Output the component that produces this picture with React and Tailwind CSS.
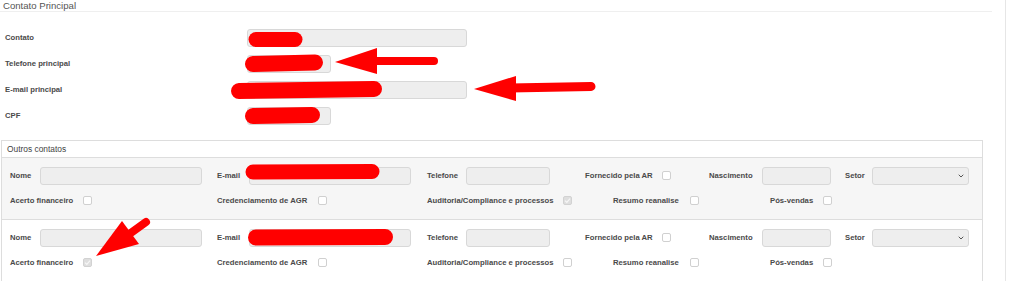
import React from "react";
import { ChevronDown } from "lucide-react";

const Box = ({ checked }) =>
  checked ? (
    <span className="flex h-[9px] w-[9px] shrink-0 items-center justify-center rounded-[2px] border border-[#d2d2d2] bg-[#dedede]">
      <svg width="7" height="7" viewBox="0 0 7 7">
        <path d="M1 3.6 L2.8 5.3 L6 1.6" stroke="#f6f6f6" strokeWidth="1.2" fill="none" />
      </svg>
    </span>
  ) : (
    <span className="h-[9px] w-[9px] shrink-0 rounded-[2px] border border-[#d0d0d0] bg-white" />
  );

const Field = ({ className }) => (
  <div className={`h-[18px] shrink-0 rounded-[3px] border border-[#d8d8d8] bg-[#eeeeee] ${className}`} />
);

const ContactRow = ({ checks, last }) => (
  <div className={`pl-[8px] pt-[9px] ${last ? "pb-[14px] bg-white" : "pb-[12px] bg-[#f6f6f6] border-b border-[#dddddd]"}`}>
    <div className="flex h-[18px] items-center">
      <div className="flex w-[207px] items-center">
        <span className="w-[30px]">Nome</span>
        <Field className="w-[162px]" />
      </div>
      <div className="flex w-[210px] items-center">
        <span className="w-[32px]">E-mail</span>
        <Field className="w-[162px]" />
      </div>
      <div className="flex w-[158px] items-center">
        <span className="w-[39px]">Telefone</span>
        <Field className="w-[84px]" />
      </div>
      <div className="flex w-[124px] items-center">
        <span className="w-[77px]">Fornecido pela AR</span>
        <Box />
      </div>
      <div className="flex w-[136px] items-center">
        <span className="w-[53px]">Nascimento</span>
        <Field className="w-[69px]" />
      </div>
      <div className="flex items-center">
        <span className="w-[27px]">Setor</span>
        <div className="flex h-[18px] w-[97px] items-center justify-end rounded-[3px] border border-[#d8d8d8] bg-[#eeeeee] pr-[3px] text-[#555]">
          <ChevronDown size={8} strokeWidth={3} />
        </div>
      </div>
    </div>
    <div className="mt-[10px] flex h-[12px] items-center">
      <div className="flex w-[207px] items-center">
        <span className="w-[73px]">Acerto financeiro</span>
        <Box checked={checks[0]} />
      </div>
      <div className="flex w-[210px] items-center">
        <span className="w-[101px]">Credenciamento de AGR</span>
        <Box checked={checks[1]} />
      </div>
      <div className="flex w-[186px] items-center">
        <span className="w-[136px]">Auditoria/Compliance e processos</span>
        <Box checked={checks[2]} />
      </div>
      <div className="flex w-[157px] items-center">
        <span className="w-[77px]">Resumo reanalise</span>
        <Box checked={checks[3]} />
      </div>
      <div className="flex items-center">
        <span className="w-[53px]">Pós-vendas</span>
        <Box checked={checks[4]} />
      </div>
    </div>
  </div>
);

const mainFields = [
  { label: "Contato", w: "w-[220px]" },
  { label: "Telefone principal", w: "w-[84px]" },
  { label: "E-mail principal", w: "w-[220px]" },
  { label: "CPF", w: "w-[84px]" },
];

export default function App() {
  return (
    <div className="relative h-[281px] w-[1024px] overflow-hidden bg-white font-['Liberation_Sans',Arial,sans-serif]">
      <div className="h-full w-[1006px] border-r border-[#e6e6e6]">
        <div className="h-[12px] w-[992px] border-b border-[#efefef] pl-[3px] text-[9.6px] leading-[11px] text-[#555]">
          Contato Principal
        </div>

        <div className="mt-[17px] flex flex-col gap-[8px] text-[7.7px] font-bold text-[#4a4a4a]">
          {mainFields.map((f) => (
            <div key={f.label} className="flex h-[18px] items-center">
              <span className="w-[247px] pl-[5px]">{f.label}</span>
              <Field className={f.w} />
            </div>
          ))}
        </div>

        <div className="ml-[1px] mt-[15px] w-[982px] border border-b-0 border-[#dddddd]">
          <div className="flex h-[17px] items-center border-b border-[#dddddd] pl-[5px] text-[8.4px] text-[#444]">
            Outros contatos
          </div>
          <div className="text-[7.7px] font-bold text-[#4a4a4a]">
            <ContactRow checks={[false, false, true, false, false]} />
            <ContactRow checks={[true, false, false, false, false]} last />
          </div>
        </div>
      </div>

      {/* red annotations drawn over the screenshot */}
      <svg className="pointer-events-none absolute left-0 top-0" width="1024" height="281">
        <g stroke="#ff0000" strokeLinecap="round" fill="none">
          <line x1="256" y1="39.5" x2="295" y2="39.5" strokeWidth="15" />
          <line x1="253" y1="64" x2="315" y2="62.5" strokeWidth="16" />
          <line x1="239" y1="91" x2="374" y2="89" strokeWidth="16" />
          <line x1="253" y1="116" x2="312" y2="115" strokeWidth="16" />
          <line x1="253" y1="172" x2="372" y2="171.5" strokeWidth="15" />
          <line x1="256" y1="237.5" x2="385" y2="237" strokeWidth="16" />
          <line x1="370" y1="61" x2="434" y2="61" strokeWidth="8" />
          <line x1="510" y1="88" x2="591" y2="86.5" strokeWidth="9" />
          <line x1="128" y1="235" x2="146" y2="222" strokeWidth="8" />
        </g>
        <g fill="#ff0000">
          <polygon points="335,62 377,48 377,74" />
          <polygon points="474,89 516,76 516,101" />
          <polygon points="96,256 122,221 139,244" />
        </g>
      </svg>
    </div>
  );
}
